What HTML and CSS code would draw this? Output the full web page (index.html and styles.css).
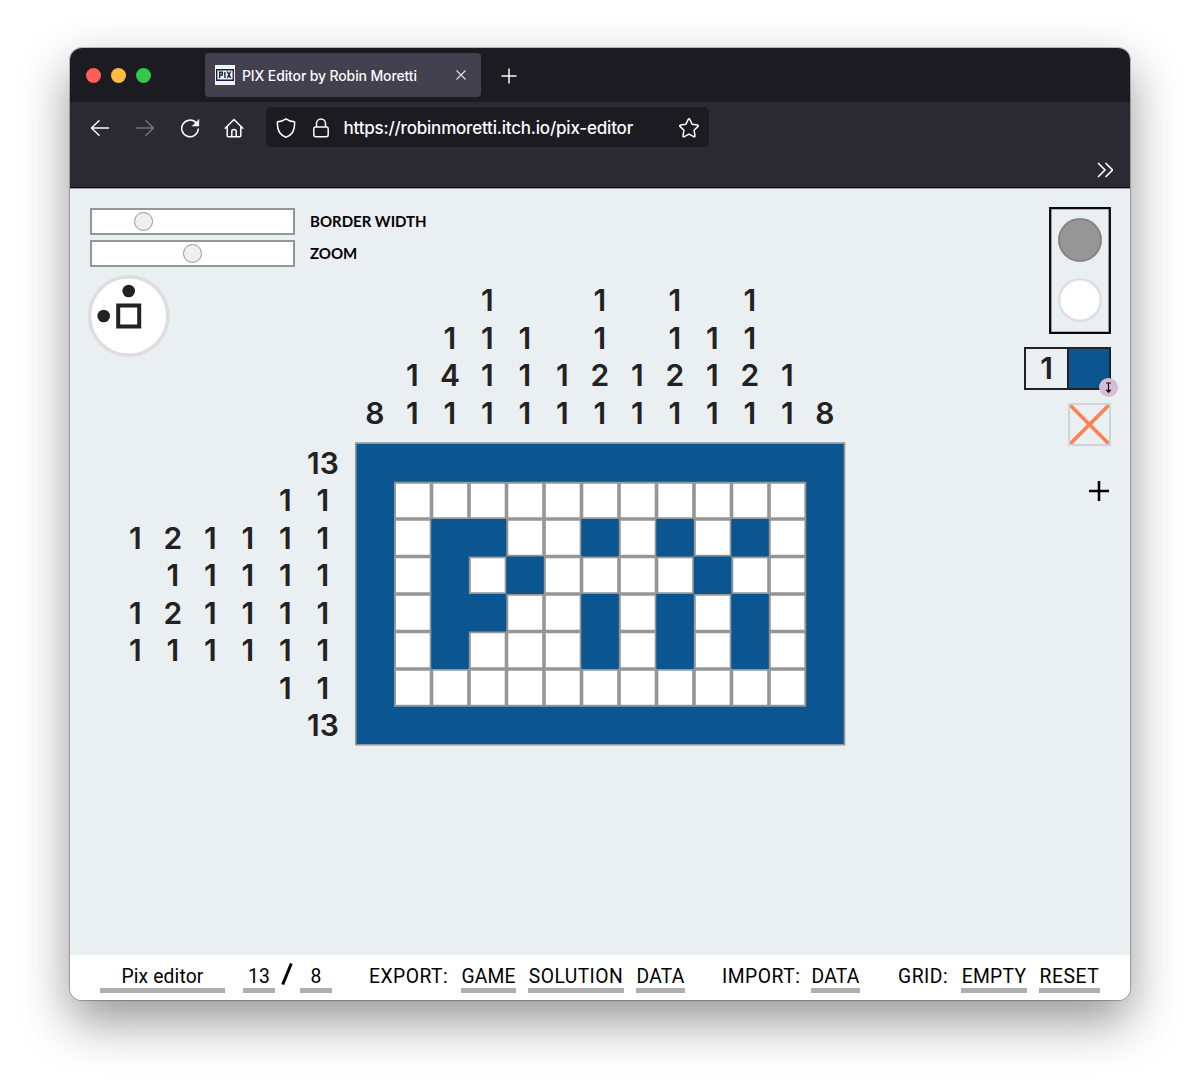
FILE: index.html
```html
<!DOCTYPE html>
<html lang="en">
<head>
<meta charset="utf-8">
<title>PIX Editor by Robin Moretti</title>
<link rel="stylesheet" href="styles.css">
</head>
<body>
<div class="window">
  <header class="tabbar">
    <div class="lights"><i class="light red"></i><i class="light yellow"></i><i class="light green"></i></div>
    <div class="tab">
      <svg class="favicon" viewBox="0 0 20 20"><path fill="#eef2f0" d="M0 0h20v20H0z"/><path fill="none" stroke="#1c2045" stroke-width="1.400" d="M1.700 4.700h16.600v10.600H1.700z"/><path fill="none" stroke="#1c2045" stroke-width="1.400" d="M4.700 13V7.200h2.600v2.900H4.700M9.900 7v6M12.300 6.500l3.400 6.500M15.700 6.500L12.300 13"/></svg>
      <span class="tab-title">PIX Editor by Robin Moretti</span>
      <svg class="tab-close" viewBox="0 0 10 10"><path d="M.5.5l9 9M9.500.5l-9 9"/></svg>
    </div>
    <svg class="new-tab" viewBox="0 0 16 16"><path d="M8 .5v15M.5 8h15"/></svg>
  </header>
  <nav class="toolbar">
    <div class="nav-row">
      <svg class="icon" viewBox="0 0 20 20"><path d="M18.500 10H1.500M9 2.700L1.500 10 9 17.300"/></svg>
      <svg class="icon dim" viewBox="0 0 20 20"><path d="M1.500 10h17M11 2.700L18.500 10 11 17.300"/></svg>
      <svg class="icon" viewBox="0 0 20 20"><path d="M16.300 5A8.300 8.300 0 1 0 18.300 11"/><path class="solid" d="M18.800 1.800V8h-6.200z"/></svg>
      <svg class="icon home" viewBox="0 0 20 20"><path d="M1.200 10.300L10 1.500l8.800 8.800M3.200 8.500v9.200q0 1 1 1h11.600q1 0 1-1V8.500M7.800 18.500v-5q0-2 2.200-2t2.200 2v5"/></svg>
      <div class="urlbar">
        <svg class="icon" viewBox="0 0 20 20"><path d="M10 .8q3.800 2.800 8.500 2.900c.7 7.500-1.300 12.900-8.500 15.600C2.800 16.600.8 11.200 1.500 3.700Q6.200 3.600 10 .8z"/></svg>
        <svg class="icon" viewBox="0 0 20 20"><path d="M5.500 9V5.500a4.500 4.500 0 0 1 9 0V9M4.500 9h11q1.700 0 1.700 1.700v6.100q0 2-2 2H4.800q-2 0-2-2v-6.100Q2.800 9 4.500 9z"/></svg>
        <span class="url">https://robinmoretti.itch.io/pix-editor</span>
        <svg class="icon" viewBox="0 0 20 20"><path d="M9.200 1.400q.8-1.300 1.600 0l2.300 4.900 5.300.7q1.400.4.600 1.400l-3.900 3.900.9 5.500q0 1.500-1.300.9L10 16.100l-4.700 2.600q-1.300.6-1.300-.9l.9-5.500L1 8.400Q.2 7.400 1.600 7l5.300-.7z"/></svg>
      </div>
    </div>
    <svg class="overflow" viewBox="0 0 16 16"><path d="M1 1l7 7-7 7M8.500 1l7 7-7 7"/></svg>
  </nav>
  <main class="canvas">
    <section class="controls">
      <label class="control"><span class="slider"><i class="thumb low"></i></span><span class="label">BORDER WIDTH</span></label>
      <label class="control"><span class="slider"><i class="thumb mid"></i></span><span class="label">ZOOM</span></label>
      <svg class="dial" viewBox="0 0 82 82"><circle cx="40.700" cy="41" r="39.200" fill="#fff" stroke="#dedede" stroke-width="3.600"/><circle cx="40.700" cy="16" r="6.300" fill="#222"/><circle cx="15.700" cy="41" r="6.300" fill="#222"/><path d="M30.200 30.500h21v21h-21z" fill="none" stroke="#222" stroke-width="4"/></svg>
    </section>
    <section class="col-clues">
      <div><b>8</b></div>
      <div><b>1</b><b>1</b></div>
      <div><b>1</b><b>4</b><b>1</b></div>
      <div><b>1</b><b>1</b><b>1</b><b>1</b></div>
      <div><b>1</b><b>1</b><b>1</b></div>
      <div><b>1</b><b>1</b></div>
      <div><b>1</b><b>1</b><b>2</b><b>1</b></div>
      <div><b>1</b><b>1</b></div>
      <div><b>1</b><b>1</b><b>2</b><b>1</b></div>
      <div><b>1</b><b>1</b><b>1</b></div>
      <div><b>1</b><b>1</b><b>2</b><b>1</b></div>
      <div><b>1</b><b>1</b></div>
      <div><b>8</b></div>
    </section>
    <section class="palette">
      <svg class="shades" viewBox="0 0 62 127"><path d="M1.200 1.200h59.600v124.600H1.200z" fill="none" stroke="#0a0a0a" stroke-width="2.300"/><circle cx="31" cy="33" r="21" fill="#969696" stroke="#848484" stroke-width="2"/><circle cx="31" cy="93" r="20.700" fill="#fff" stroke="#dedede" stroke-width="2.200"/></svg>
      <div class="swatch">
        <b>1</b><span class="swatch-color"></span>
        <svg class="handle" viewBox="0 0 19 19"><circle cx="9.500" cy="9.500" r="9.500" fill="#d5bcd9"/><path d="M7 5h5M9.500 5v8.500M7.800 12.300l1.700 2 1.700-2z" fill="#111" stroke="#111" stroke-width="1.200"/></svg>
      </div>
      <svg class="eraser" viewBox="0 0 43 43"><path d="M1 1h41v41H1z" fill="none" stroke="#d0d4d6" stroke-width="2"/><path d="M2 4.600V2h2.600L21.500 18.900 38.400 2H41v2.600L24.100 21.500 41 38.400V41h-2.600L21.500 24.100 4.600 41H2v-2.600L18.900 21.500z" fill="#ff8055"/></svg>
      <svg class="add" viewBox="0 0 20 20"><path d="M10 0v20M0 10h20" stroke="#000" stroke-width="2.500"/></svg>
    </section>
    <section class="row-clues">
      <div><b>13</b></div>
      <div><b>1</b><b>1</b></div>
      <div><b>1</b><b>2</b><b>1</b><b>1</b><b>1</b><b>1</b></div>
      <div><b>1</b><b>1</b><b>1</b><b>1</b><b>1</b></div>
      <div><b>1</b><b>2</b><b>1</b><b>1</b><b>1</b><b>1</b></div>
      <div><b>1</b><b>1</b><b>1</b><b>1</b><b>1</b><b>1</b></div>
      <div><b>1</b><b>1</b></div>
      <div><b>13</b></div>
    </section>
    <svg class="board" viewBox="355 442 491 304">
      <path fill="#969696" d="M355 442.300h490.300v303.300H355z"/>
      <path fill="#0b5590" d="M356.600 444H843.700v300H356.600z"/>
      <path fill="#fff" d="M394 482h411.500v224H394z"/>
      <path fill="none" stroke="#969696" stroke-width="1.900" d="M395 482.700h410.300v223H395z"/>
      <path fill="none" stroke="#969696" stroke-width="3.600" d="M431.500 482v224M469 482v224M506.500 482v224M544 482v224M581.500 482v224M619 482v224M656.500 482v224M694 482v224M731.500 482v224M769 482v224M394 519h412M394 556.500h412M394 594h412M394 631.500h412M394 669h412"/>
      <g fill="#0b5590" transform="translate(-.2)">
        <path d="M431.500 519h75v37.500h-37.500V594h37.500v37.500h-37.500V669h-37.500z"/>
        <path d="M506.500 556.500H544V594h-37.500z"/>
        <path d="M581.500 519H619v37.500h-37.500zM656.500 519H694v37.500h-37.500zM731.500 519H769v37.500h-37.500zM694 556.500h37.500V594H694z"/>
        <path d="M581.500 594H619v75h-37.500zM656.500 594H694v75h-37.500zM731.500 594H769v75h-37.500z"/>
      </g>
    </svg>
  </main>
  <footer class="footer">
    <span class="field name">Pix editor</span>
    <span class="field size">13</span>
    <svg class="slash" viewBox="0 0 12 22"><path d="M1.700 21.500L10.300.5" stroke="#000" stroke-width="3"/></svg>
    <span class="field size">8</span>
    <div class="group export"><span class="caption">EXPORT:</span><a class="field game">GAME</a><a class="field solution">SOLUTION</a><a class="field data">DATA</a></div>
    <div class="group import"><span class="caption">IMPORT:</span><a class="field data">DATA</a></div>
    <div class="group grid"><span class="caption">GRID:</span><a class="field empty">EMPTY</a><a class="field reset">RESET</a></div>
  </footer>
</div>
</body>
</html>
```
FILE: styles.css
```css
* { box-sizing: border-box; }
body { margin: 0; height: 1092px; padding: 48px 70px; background: #fff; overflow: hidden; }
svg { display: block; flex: none; }
.window {
  width: 1060px; height: 952px; display: flex; flex-direction: column;
  border-radius: 12px; overflow: hidden; background: #fff;
  box-shadow: 0 0 0 1px rgba(0,0,0,.24), 0 21px 50px rgba(0,0,0,.42);
}
.tabbar { height: 54px; background: #1c1b22; display: flex; align-items: center; flex: none; }
.lights { display: flex; gap: 10px; padding-left: 16px; width: 135px; }
.light { width: 15px; height: 15px; border-radius: 50%; }
.red { background: #ff5f57; }
.yellow { background: #febc40; }
.green { background: #34c84a; }
.tab { width: 276px; height: 44px; border-radius: 4px; background: #42414d; display: flex; align-items: center; padding: 0 15px 0 10px; }
.favicon { width: 20px; height: 20px; margin-right: 7px; }
.tab-title { font: 500 14px/20px Inter, sans-serif; letter-spacing: -.13px; color: #fbfbfe; flex: 1; white-space: nowrap; padding-top: 2px; }
.tab-close { width: 10px; height: 10px; fill: none; stroke: #e4e4e8; stroke-width: 1.1; }
.new-tab { width: 16px; height: 16px; margin: 1px 0 0 20px; fill: none; stroke: #fbfbfe; stroke-width: 1.5; }
.toolbar { height: 86px; background: #2b2a33; border-bottom: 1px solid #0c0c10; padding-top: 5px; flex: none; }
.nav-row { display: flex; align-items: center; height: 42px; gap: 25px; padding-left: 20px; }
.icon { width: 20px; height: 20px; fill: none; stroke: #fbfbfe; stroke-width: 1.5; stroke-linecap: round; stroke-linejoin: round; }
.icon .solid { fill: #fbfbfe; stroke-width: .6; }
.dim { stroke: #77767e; }
.home { margin-left: -1px; }
.urlbar { width: 443px; height: 40px; margin: -2px 0 0 -3px; border-radius: 5px; background: #1c1b22; display: flex; align-items: center; padding: 2px 10px 0; gap: 15px; }
.url { font: 500 17px/24px Inter, sans-serif; letter-spacing: -.2px; color: #fbfbfe; flex: 1; white-space: nowrap; margin-left: -2.500px; }
.overflow { width: 16px; height: 16px; margin: 13px 17px 0 auto; fill: none; stroke: #fbfbfe; stroke-width: 1.6; }

.canvas { flex: 1; background: #eaeff2; border-top: 1px solid #9b9da1; display: grid; grid-template-columns: 285px 491px 1fr; grid-template-rows: 253px 304px; }
.controls { padding: 19px 0 0 20px; }
.control { display: flex; align-items: center; height: 27px; width: 340px; margin-bottom: 5px; gap: 15px; font: 700 15px/20px Lato, sans-serif; color: #000; white-space: nowrap; }
.label { padding-bottom: 2px; }
.slider { width: 205px; height: 27px; border: 2px solid #969696; background: #fff; display: flex; align-items: center; }
.thumb { width: 19px; height: 19px; border-radius: 50%; border: 1px solid #969696; background: #efefef; }
.low { margin-left: 42px; }
.mid { margin-left: 91px; }
.dial { width: 82px; height: 82px; margin: 8px 0 0 -2px; }
.col-clues { display: grid; grid-template-columns: repeat(13, 37.500px); padding: 0 0 10px 1.200px; }
.col-clues div { display: flex; flex-direction: column; justify-content: flex-end; }
b { display: block; width: 37.500px; height: 37.500px; font: 600 30px/37.500px Inter, sans-serif; color: #222; text-align: center; }
.row-clues { padding-top: 2.500px; }
.row-clues div { display: flex; justify-content: flex-end; padding-right: 13.300px; }
.board { width: 491px; height: 304px; }
.palette { grid-row: 1 / 3; grid-column: 3; display: flex; flex-direction: column; align-items: flex-end; padding: 18px 19px 0 0; }
.row-clues { grid-column: 1; grid-row: 2; }
.board { grid-column: 2; grid-row: 2; }
.shades { width: 62px; height: 127px; }
.swatch { position: relative; display: flex; width: 87px; height: 43px; border: 2px solid #222; margin: 13px 0; }
.swatch b { width: 41px; height: 39px; line-height: 39px; }
.swatch-color { flex: 1; border-left: 2px solid #222; background: #0b5590; }
.handle { position: absolute; width: 19px; height: 19px; right: -9px; bottom: -9px; }
.eraser { width: 43px; height: 43px; }
.add { width: 20px; height: 20px; margin: 35px 2px 0 0; }

.footer { height: 45px; background: #fff; display: flex; align-items: flex-start; padding: 8px 30px 0; font: 400 19.300px/27px Roboto, sans-serif; letter-spacing: .15px; color: #000; white-space: nowrap; flex: none; }
.field { height: 30px; border-bottom: 5px solid #afafaf; text-align: center; flex: none; }
.name { width: 125px; margin-right: 18px; }
.size { width: 32px; }
.slash { width: 12px; height: 22px; margin: 0 7px 0 6px; }
.group { display: flex; gap: 12px; }
.caption { margin-right: 1px; letter-spacing: .5px; }
.export { margin-left: 37px; }
.export .caption { width: 79px; }
.game { width: 55px; }
.solution { width: 96px; letter-spacing: .45px; }
.data { width: 49px; }
.import { margin-left: 37px; }
.import .caption { width: 76px; }
.grid { margin-left: auto; }
.grid .caption { width: 50px; }
.empty { width: 66px; letter-spacing: .3px; }
.reset { width: 61px; letter-spacing: .6px; }
```
